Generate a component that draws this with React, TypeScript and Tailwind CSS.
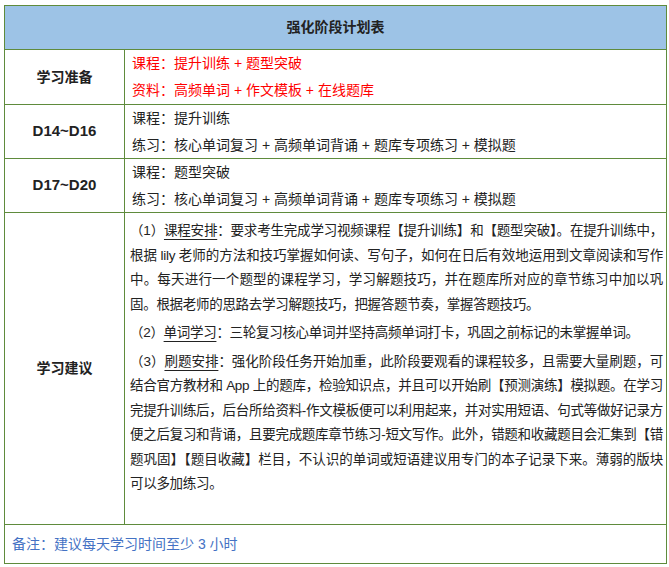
export default function App() {
  const f = { fontFamily: '"Liberation Sans","Noto Sans CJK SC",sans-serif' };
  const u = "underline underline-offset-4";
  return (
    <div className="bg-white w-[669px] h-[567px] pt-[5px] pl-[4px]" style={f}>
      <div className="w-[663px] border border-[#5f8b3c] text-[14px] text-[#222]">
        <div className="h-[44px] bg-[#9dc3e6] flex items-center justify-center font-bold border-b border-[#5f8b3c]">强化阶段计划表</div>
        <div className="flex border-b border-[#5f8b3c] h-[55px]">
          <div className="w-[120px] shrink-0 border-r border-[#5f8b3c] flex items-center justify-center font-bold">学习准备</div>
          <div className="pl-[7px] flex flex-col justify-center gap-[8px] text-[#ff0000] leading-[19px]">
            <div>课程：提升训练 + 题型突破</div>
            <div>资料：高频单词 + 作文模板 + 在线题库</div>
          </div>
        </div>
        {[["D14~D16", "提升训练"], ["D17~D20", "题型突破"]].map(([d, c]) => (
          <div key={d} className="flex border-b border-[#5f8b3c] h-[54px]">
            <div className="w-[120px] shrink-0 border-r border-[#5f8b3c] flex items-center justify-center font-bold text-[15px]">{d}</div>
            <div className="pl-[7px] flex flex-col justify-center gap-[8px] leading-[19px]">
              <div>课程：{c}</div>
              <div>练习：核心单词复习 + 高频单词背诵 + 题库专项练习 + 模拟题</div>
            </div>
          </div>
        ))}
        <div className="flex border-b border-[#5f8b3c] h-[312px]">
          <div className="w-[120px] shrink-0 border-r border-[#5f8b3c] flex items-center justify-center font-bold">学习建议</div>
          <div className="pl-[5px] pr-[3px] pt-[6px] text-justify leading-[24.5px] flex flex-col gap-[4px] text-[13.5px] tracking-[-0.3px]">
            <p>（1）<span className={u}>课程安排</span>：要求考生完成学习视频课程【提升训练】和【题型突破】。在提升训练中，根据 lily 老师的方法和技巧掌握如何读、写句子，如何在日后有效地运用到文章阅读和写作中。每天进行一个题型的课程学习，学习解题技巧，并在题库所对应的章节练习中加以巩固。根据老师的思路去学习解题技巧，把握答题节奏，掌握答题技巧。</p>
            <p>（2）<span className={u}>单词学习</span>：三轮复习核心单词并坚持高频单词打卡，巩固之前标记的未掌握单词。</p>
            <p>（3）<span className={u}>刷题安排</span>：强化阶段任务开始加重，此阶段要观看的课程较多，且需要大量刷题，可结合官方教材和 App 上的题库，检验知识点，并且可以开始刷【预测演练】模拟题。在学习完提升训练后，后台所给资料-作文模板便可以利用起来，并对实用短语、句式等做好记录方便之后复习和背诵，且要完成题库章节练习-短文写作。此外，错题和收藏题目会汇集到【错题巩固】【题目收藏】栏目，不认识的单词或短语建议用专门的本子记录下来。薄弱的版块可以多加练习。</p>
          </div>
        </div>
        <div className="h-[38px] flex items-center pl-[7px] text-[#4472c4]">备注：建议每天学习时间至少 3 小时</div>
      </div>
    </div>
  );
}
